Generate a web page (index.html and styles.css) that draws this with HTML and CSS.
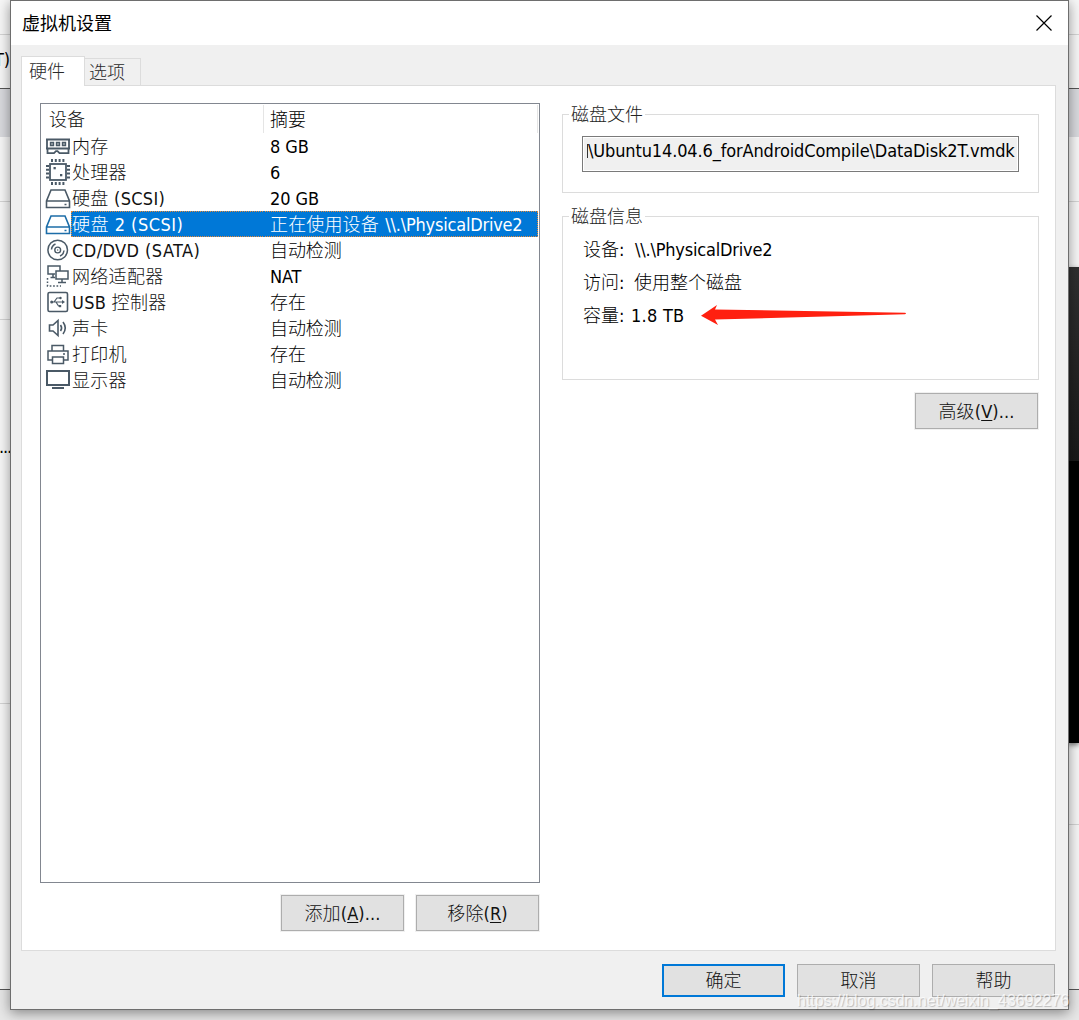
FILE: index.html
```html
<!DOCTYPE html>
<html lang="zh-CN">
<head>
<meta charset="utf-8">
<title>虚拟机设置</title>
<link rel="stylesheet" href="styles.css">
</head>
<body>
<div class="desktop">
  <div class="rule" style="top:34px"></div>
  <div class="toolband"></div>
  <div class="rule" style="top:201px"></div>
  <div class="rule rule-left" style="top:319px"></div>
  <div class="rule rule-left" style="top:703px"></div>
  <div class="rule rule-right" style="top:824px"></div>
  <div class="console"><div class="console-top"></div></div>
  <div class="statusbar"></div>
  <span class="bg-text bg-menu">T)</span>
  <span class="bg-text bg-dots">...</span>

  <main class="dialog">
    <header class="titlebar">
      <h1>虚拟机设置</h1>
      <svg class="close" width="16" height="16" viewBox="0 0 16 16"><path d="M.5.5l15 15M15.500.500l-15 15" stroke="#000" stroke-width="1.2" fill="none"/></svg>
    </header>
    <nav class="tabs"><span class="tab active">硬件</span><span class="tab">选项</span></nav>
    <section class="panel">
      <div class="left">
        <div class="list">
          <div class="row head"><span class="name">设备</span><span class="sum">摘要</span></div>
          <div class="row"><svg viewBox="0 0 26 26"><path d="M1 6.500h24M2 6v9.500M24 6v9.500M1 15.500h24M2.500 15v5.200h6.500l2-2h1.500l2 2h9V15" fill="none" stroke="#4a5966" stroke-width="1.800"/><path d="M5.500 9.500h3v3h-3zM11.500 9.500h3v3h-3zM17.500 9.500h3v3h-3z" fill="#b0b6bc" stroke="#4a5966" stroke-width="1.400"/></svg><span class="name">内存</span><span class="sum">8 GB</span></div>
          <div class="row"><svg viewBox="0 0 26 26"><rect x="5" y="5" width="16" height="16" fill="none" stroke="#4a5966" stroke-width="1.800"/><path d="M7 1.500h14M7 24.500h14" stroke="#4a5966" stroke-width="3" stroke-dasharray="2 1.800" transform="translate(-1 0)"/><path d="M2.500 6v14M23.500 6v14" stroke="#4a5966" stroke-width="3" stroke-dasharray="2 1.800"/><rect x="8.500" y="8" width="2.300" height="2.300" fill="#4a5966"/><rect x="15" y="15" width="2.300" height="2.300" fill="#4a5966"/></svg><span class="name">处理器</span><span class="sum">6</span></div>
          <div class="row"><svg viewBox="0 0 26 26"><path d="M6 5h14l4.500 11v6.500h-23V16zM1.500 16h23" fill="none" stroke="#4a5966" stroke-width="1.600"/><path d="M19.500 19.500h2" stroke="#4a5966" stroke-width="1.500"/></svg><span class="name">硬盘 (SCSI)</span><span class="sum">20 GB</span></div>
          <div class="row selected"><svg viewBox="0 0 26 26"><path d="M6 5h14l4.500 11v6.500h-23V16zM1.500 16h23" fill="none" stroke="#1c6da8" stroke-width="1.600"/><path d="M19.500 19.500h2" stroke="#1c6da8" stroke-width="1.500"/></svg><span class="name">硬盘 2 (SCSI)</span><span class="sum">正在使用设备 <span class="drive">\\.\PhysicalDrive2</span></span></div>
          <div class="row"><svg viewBox="0 0 26 26"><g fill="none" stroke="#4a5966"><circle cx="12.700" cy="13" r="9.800" stroke-width="1.500"/><circle cx="12.700" cy="13" r="2.900" stroke-width="1.400"/><path d="M6.500 12.500a6.500 6.500 0 0 1 4-5.500M19 13.500a6.500 6.500 0 0 1-4 5.500" stroke-width="1.500"/></g><circle cx="12.700" cy="13" r=".7" fill="#4a5966"/></svg><span class="name wide">CD/DVD (SATA)</span><span class="sum">自动检测</span></div>
          <div class="row"><svg viewBox="0 0 26 26"><g fill="none" stroke="#4a5966" stroke-width="1.500"><path d="M10 11H3V3h12v5M5.500 14.500H10M8 11v3.500M11 8h12v8H11zM17 16v3.500M13 19.500h8"/><path d="M2.500 15v8H16" stroke-dasharray="1.700 1.700"/></g></svg><span class="name">网络适配器</span><span class="sum">NAT</span></div>
          <div class="row"><svg viewBox="0 0 26 26"><g fill="none" stroke="#4a5966"><rect x="3" y="3.500" width="19.500" height="19" rx="1.500" stroke-width="1.600"/><path d="M6 13h12M9 13l3-4h3M11 13l2.500 4H15" stroke-width="1.200"/></g><path d="M17 11l3 2-3 2z" fill="#4a5966"/><circle cx="6.700" cy="13" r="1.500" fill="#4a5966"/><circle cx="15.500" cy="9" r="1.200" fill="#4a5966"/><rect x="14" y="16" width="2.200" height="2.200" fill="#4a5966"/></svg><span class="name usb">USB 控制器</span><span class="sum">存在</span></div>
          <div class="row"><svg viewBox="0 0 26 26"><path d="M4.500 10h3.500l5-4.500v15L8 16H4.500zM15.500 10q2.200 3 0 6M18 7q4.500 6 0 12" fill="none" stroke="#4a5966" stroke-width="1.600"/></svg><span class="name">声卡</span><span class="sum">自动检测</span></div>
          <div class="row"><svg viewBox="0 0 26 26"><path d="M7 10V4.500h11.500V10M7 19H3v-9h20v9h-4M7.500 16h11v6.500h-11zM18 13h2" fill="none" stroke="#4a5966" stroke-width="1.500"/></svg><span class="name">打印机</span><span class="sum">存在</span></div>
          <div class="row"><svg viewBox="0 0 26 26"><rect x="2" y="4" width="22" height="14" fill="none" stroke="#4a5966" stroke-width="2"/><path d="M7 21h12" stroke="#4a5966" stroke-width="2"/></svg><span class="name">显示器</span><span class="sum">自动检测</span></div>
        </div>
        <div class="actions"><button class="btn">添加(<u>A</u>)...</button><button class="btn">移除(<u>R</u>)</button></div>
      </div>
      <div class="right">
        <div class="group file"><h2>磁盘文件</h2><div class="field"><i></i><span>\Ubuntu14.04.6_forAndroidCompile\DataDisk2T.vmdk</span></div></div>
        <div class="group info"><h2>磁盘信息</h2>
          <p>设备<b>:</b><span class="drive">\\.\PhysicalDrive2</span></p>
          <p>访问<b>:</b><span>使用整个磁盘</span></p>
          <p>容量<b>:</b><span class="capacity">1.8 TB</span><svg class="arrow" width="210" height="24" viewBox="0 0 210 24"><path d="M1 12.700L17 2l-2 4.500 190 3.300q2 .7 0 1.400L15 16.500l3 5.500z" fill="#ff2010"/></svg></p>
        </div>
        <button class="btn advanced">高级(<u>V</u>)...</button>
      </div>
    </section>
    <footer class="footer"><button class="btn primary">确定</button><button class="btn">取消</button><button class="btn">帮助</button></footer>
  </main>
  <span class="watermark">https://blog.csdn.net/weixin_43692276</span>
</div>
</body>
</html>
```

FILE: styles.css
```css
* { box-sizing: border-box; }
body { margin: 0; }
.desktop {
  position: relative; width: 1079px; height: 1020px; overflow: hidden;
  background: #f7f7f7; color: #000;
  font: 18px/26px "DejaVu Sans Condensed", "Noto Sans CJK SC", sans-serif;
  font-weight: 300; letter-spacing: -.1px;
}
.rule { position: absolute; left: 0; width: 100%; height: 1px; background: #d4d4d4; }
.rule-left { width: 10px; }
.rule-right { left: 1069px; width: 10px; }
.toolband { position: absolute; top: 88px; width: 100%; height: 49px; background: #d9dade; border-top: 1px solid #555; }
.console { position: absolute; left: 1068px; top: 267px; width: 11px; height: 476px; background: #000; box-shadow: 0 2px 5px #777; }
.console-top { height: 194px; background: linear-gradient(#303030, #191919); }
.statusbar { position: absolute; top: 989px; width: 100%; height: 31px; background: #e7e7e7; border-top: 1px solid #555; }
.bg-text { position: absolute; }
.bg-menu { left: -6px; top: 47px; }
.bg-dots { left: -1px; top: 434px; letter-spacing: -1.200px; }
.dialog {
  position: absolute; left: 10px; top: 0; width: 1059px; height: 1010px;
  background: #f0f0f0; border: 1px solid #6e6e6e; box-shadow: 0 3px 12px rgba(0,0,0,.42);
  display: flex; flex-direction: column;
}
.titlebar { height: 44px; background: #fff; display: flex; align-items: center; justify-content: space-between; padding: 0 16px 0 11px; flex: none; }
h1 { margin: -3px 0 0; font-family: "Noto Sans CJK SC", sans-serif; font-size: 18px; font-weight: 400; letter-spacing: 0; }
.close { margin-top: -1px; }
.tabs { height: 41px; padding: 11px 0 0 10px; display: flex; align-items: flex-end; flex: none; position: relative; z-index: 1; margin-bottom: -1px; }
.tab { height: 28px; width: 56px; border: 1px solid #dcdcdc; border-left: 0; padding: 1px 0 0 4px; color: #292929; letter-spacing: 0; }
.tab.active { height: 30px; width: 64px; background: #fff; border: 1px solid #dcdcdc; border-bottom: 0; padding: 2px 0 0 7px; }
.panel { width: 1035px; height: 866px; margin-left: 10px; padding: 17px 16px 0 18px; border: 1px solid #dcdcdc; background: #fff; display: flex; gap: 22px; flex: none; }
.left { width: 500px; }
.list { height: 780px; border: 1px solid #828790; }
.row { height: 26px; display: flex; padding-left: 4px; }
.row svg { width: 26px; height: 26px; flex: none; }
.row .name, .row .sum { line-height: 28px; height: 26px; white-space: nowrap; }
.row .name { width: 192px; color: #111; padding-left: 1px; letter-spacing: .3px; }
.row .sum { width: 275px; padding-left: 7px; }
.row.head { height: 29px; padding: 1px 0 0 8px; }
.row.head .name, .row.head .sum { height: 28px; line-height: 30px; letter-spacing: 0; }
.row.head .name { width: 214px; padding-left: 0; }
.row.head .sum { border-left: 1px solid #e5e5e5; border-right: 1px solid #e5e5e5; padding-left: 6px; }
.row .name.wide { letter-spacing: .43px; }
.selected .name, .selected .sum { color: #fff; background: #0078d7; outline: 1px dotted #e58a3a; outline-offset: -1px; }
.selected .name { clip-path: inset(0 1px 0 0); margin-right: -2px; width: 194px; letter-spacing: .5px; }
.selected .sum { clip-path: inset(0 0 0 1px); letter-spacing: .15px; }
.drive { letter-spacing: -.2px; }
.selected .drive { margin-left: 1px; }
.actions { display: flex; justify-content: flex-end; gap: 12px; padding: 12px 1px 0 0; }
.btn { width: 123px; height: 36px; padding: 2px 0 0; border: 1px solid #adadad; background: #e1e1e1; color: #111; font: inherit; letter-spacing: .1px; box-shadow: 0 0 0 1px #f0f0f0; }
u { text-decoration-thickness: 1px; text-underline-offset: 2px; }
.right { width: 477px; padding-top: 11px; }
.group { border: 1px solid #dcdcdc; position: relative; }
h2 { margin: 0; padding: 0 2px; background: #fff; font: inherit; line-height: 24px; color: #222; position: absolute; top: -12px; left: 6px; letter-spacing: 0; }
.file { height: 79px; padding: 21px 19px 0; }
.field { height: 36px; border: 1px solid #7a7a7a; background: #f0f0f0; box-shadow: inset 0 0 0 1px #fff; display: flex; padding: 1px 2px 0 4px; white-space: nowrap; letter-spacing: -.13px; }
.field i { width: 1px; height: 14px; margin-top: 6px; background: #333; flex: none; }
.info { height: 164px; margin-top: 23px; padding: 20px 0 0 20px; }
.info p { margin: 0 0 7px; display: flex; height: 26px; letter-spacing: 0; }
.info b { font-weight: 400; width: 15px; }
.info .drive { margin-left: 1px; }
.info .capacity { margin-left: -3px; width: 67px; letter-spacing: .25px; }
.arrow { margin: 0 0 0 2px; }
.advanced { display: block; margin: 13px 1px 0 auto; }
.footer { display: flex; justify-content: flex-end; gap: 12px; padding: 13px 13px 0 0; }
.footer .btn { height: 33px; padding: 0; box-shadow: none; letter-spacing: 0; }
.footer .primary { border: 2px solid #0078d7; }
.watermark { position: absolute; left: 797px; top: 989px; font: 16px/24px "Liberation Sans", sans-serif; letter-spacing: 0; color: rgba(255,255,255,.75); text-shadow: 1px 1px 1px rgba(0,0,0,.22); white-space: nowrap; }
```
